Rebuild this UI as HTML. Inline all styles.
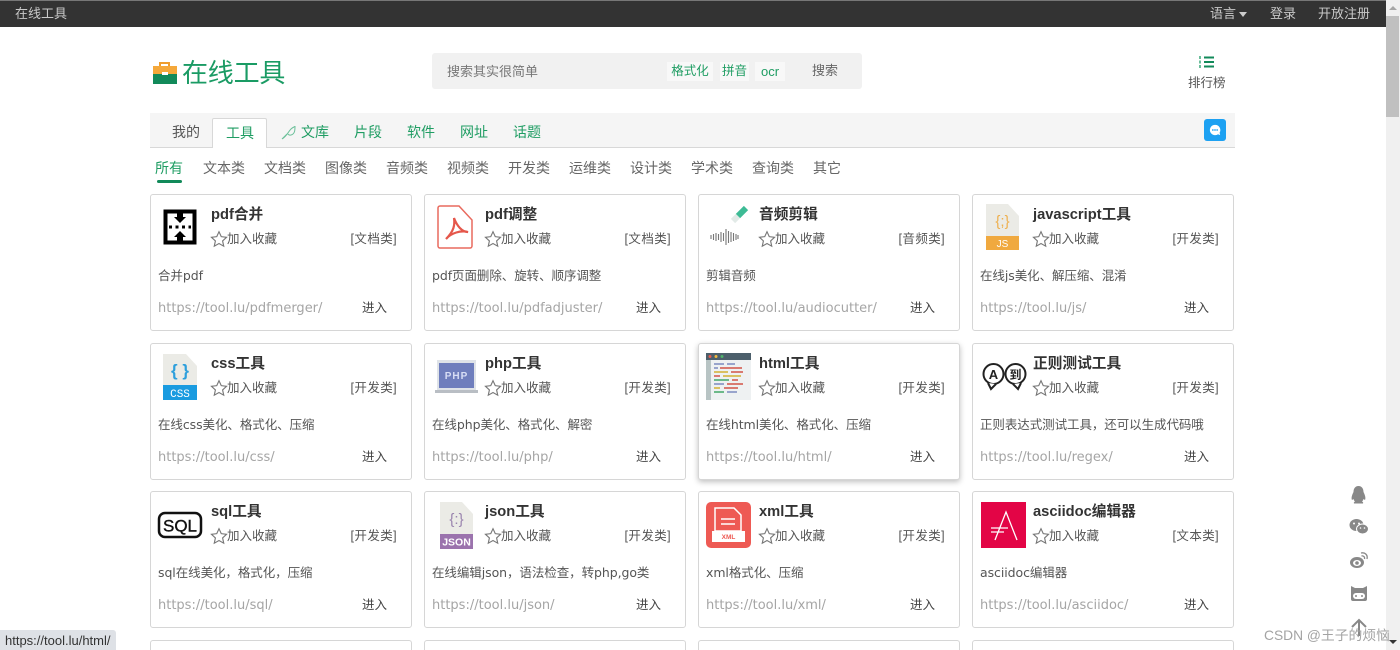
<!DOCTYPE html>
<html lang="zh"><head><meta charset="utf-8"><title>在线工具</title>
<style>
*{box-sizing:border-box}
html,body{margin:0;padding:0;width:1400px;height:650px;overflow:hidden;background:#fff}
body{position:relative;font-family:"Liberation Sans","Noto Sans CJK SC",sans-serif;color:#555}
.a{position:absolute;white-space:nowrap}
#top{left:0;top:0;width:1386px;height:27px;background:#333;border-top:1px solid #777}
.t{color:#c9c9c9;font-size:13px;line-height:26px;top:1px}
.n{top:122px;font-size:14px;line-height:20px;color:#1f9d63}
.s{top:158px;font-size:14px;line-height:20px;color:#666}
.c{position:absolute;width:262px;height:137px;background:#fff;border:1px solid #d6d6d6;border-radius:3px}
.c>*{position:absolute;white-space:nowrap}
.h{left:60px;top:10px;font-size:14.7px;line-height:20px;font-weight:700;color:#333;font-family:"Liberation Sans","Noto Sans CJK SC",sans-serif}
.st{left:59px;top:35px;width:18px;height:18px}
.f{left:76px;top:34px;font-size:12.5px;line-height:20px;color:#555}
.k{right:14px;top:34px;font-size:12.5px;line-height:20px;color:#555;letter-spacing:.4px}
.d{left:7px;top:71px;font-size:12.5px;line-height:20px;color:#555;font-family:"DejaVu Sans","Noto Sans CJK SC",sans-serif;letter-spacing:-.07px}
.u{left:7px;top:104px;font-size:13px;line-height:20px;color:#a5a5a5;font-family:"DejaVu Sans",sans-serif}
.e{left:211px;top:103px;font-size:12.5px;line-height:20px;color:#444}
.c>.i{left:8px;top:8px;width:48px;height:48px;overflow:visible}
.l{height:10px;border-bottom:0;border-radius:3px 3px 0 0}
</style></head><body>
<div class="a" id="top"></div>
<div class="a t" style="left:15px">在线工具</div>
<div class="a t" style="left:1210px">语言</div>
<div class="a" style="left:1239px;top:12px;border:4.5px solid transparent;border-top:5px solid #ccc;border-bottom:0"></div>
<div class="a t" style="left:1270px">登录</div>
<div class="a t" style="left:1318px">开放注册</div>

<div class="a" style="left:1386px;top:0;width:14px;height:650px;background:#f0f0f0"></div>
<div class="a" style="left:1386px;top:16px;width:13px;height:101px;background:#c0c0c0"></div>
<div class="a" style="left:1389px;top:6px;border:4px solid transparent;border-bottom:4px solid #a6a6a6;border-top:0"></div>
<div class="a" style="left:1389px;top:640px;border:4px solid transparent;border-top:4px solid #333;border-bottom:0"></div>

<svg class="a" style="left:152px;top:59px" width="26" height="26" viewBox="0 0 26 26"><path d="M8 7V4h9v3" fill="none" stroke="#ef9d2d" stroke-width="2"/><rect x="1" y="7" width="24" height="8" fill="#f5a83a"/><rect x="1" y="15" width="24" height="10" fill="#128a5a"/><rect x="10" y="13" width="6" height="3" fill="#fff"/></svg>
<div class="a" style="left:182px;top:53.500px;font-size:26px;line-height:38px;color:#1a9b64;letter-spacing:-.2px">在线工具</div>

<div class="a" style="left:432px;top:53px;width:430px;height:36px;background:#f1f1f1;border-radius:3px"></div>
<div class="a" style="left:447px;top:62px;font-size:13px;line-height:20px;color:#777">搜索其实很简单</div>
<div class="a" style="left:667px;top:62px;width:46px;height:19px;background:#f8f8f8;font-size:12.5px;line-height:19px;color:#1f9d63;text-align:center">格式化</div>
<div class="a" style="left:720px;top:62px;width:29px;height:19px;background:#f8f8f8;font-size:12.5px;line-height:19px;color:#1f9d63;text-align:center">拼音</div>
<div class="a" style="left:755px;top:62px;width:30px;height:19px;background:#f8f8f8;font-size:13px;line-height:19px;color:#1f9d63;text-align:center">ocr</div>
<div class="a" style="left:812px;top:61px;font-size:13px;line-height:20px;color:#666">搜索</div>

<svg class="a" style="left:1199px;top:55px" width="16" height="15" viewBox="0 0 16 15"><path d="M5 2.500h10M5 7h10M5 11.500h10" stroke="#128a5a" stroke-width="2"/><path d="M1 1v3M1 5.500v3M1 10v3" stroke="#3aa87a" stroke-width="1.500"/></svg>
<div class="a" style="left:1188px;top:73px;font-size:12.5px;line-height:20px;color:#555">排行榜</div>

<div class="a" style="left:150px;top:113px;width:1085px;height:35px;background:#f5f5f5;border-bottom:1px solid #d8d8d8"></div>
<div class="a" style="left:212px;top:118px;width:55px;height:30px;background:#fff;border:1px solid #d8d8d8;border-bottom:0;border-radius:2px 2px 0 0"></div>
<div class="a n" style="left:172px;color:#555">我的</div>
<div class="a n" style="left:226px;top:123px">工具</div>
<svg class="a" style="left:281px;top:124px" width="16" height="16" viewBox="0 0 16 16"><path d="M1 15C6 12 7 8 10 5c2-2 4-2 4-3 0 4 0 8-4 9-2 .5-3-1-3-1M1 15l5-5" fill="none" stroke="#6cc09a" stroke-width="1"/></svg>
<div class="a n" style="left:301px">文库</div>
<div class="a n" style="left:354px">片段</div>
<div class="a n" style="left:407px">软件</div>
<div class="a n" style="left:460px">网址</div>
<div class="a n" style="left:513px">话题</div>
<div class="a" style="left:1204px;top:119px;width:22px;height:22px;background:#1da1f2;border-radius:3px"></div>
<svg class="a" style="left:1209px;top:124px" width="12" height="12" viewBox="0 0 14 14"><path d="M7 1a6 6 0 1 0 3.500 10.900L13 13l-.6-3A6 6 0 0 0 7 1z" fill="#fff"/><circle cx="4.500" cy="7" r="1" fill="#1da1f2"/><circle cx="7" cy="7" r="1" fill="#1da1f2"/><circle cx="9.500" cy="7" r="1" fill="#1da1f2"/></svg>

<div class="a s" style="left:155px;color:#1f9d63">所有</div>
<div class="a" style="left:157px;top:180px;width:25px;height:3px;background:#128a5a;border-radius:2px"></div>
<div class="a s" style="left:203px">文本类</div>
<div class="a s" style="left:264px">文档类</div>
<div class="a s" style="left:325px">图像类</div>
<div class="a s" style="left:386px">音频类</div>
<div class="a s" style="left:447px">视频类</div>
<div class="a s" style="left:508px">开发类</div>
<div class="a s" style="left:569px">运维类</div>
<div class="a s" style="left:630px">设计类</div>
<div class="a s" style="left:691px">学术类</div>
<div class="a s" style="left:752px">查询类</div>
<div class="a s" style="left:813px">其它</div>

<!-- row 1 -->
<div class="c" style="left:150px;top:194px"><svg class="i" viewBox="0 0 48 48"><rect x="6.500" y="8.500" width="29" height="31" fill="#fff" stroke="#000" stroke-width="4"/><path d="M18 10h6v4h3l-6 6-6-6h3zM18 38v-4h-3l6-6 6 6h-3v4z" fill="#000"/><path d="M10 24h22" stroke="#000" stroke-width="3" stroke-dasharray="3 3.500"/></svg><div class="h">pdf合并</div><svg class="st" viewBox="0 0 16 16"><path d="M8 1.500l2 4.400 4.700.6-3.500 3.200 1 4.700L8 12l-4.200 2.400 1-4.700L1.300 6.500 6 5.900z" fill="none" stroke="#777"/></svg><div class="f">加入收藏</div><div class="k">[文档类]</div><div class="d">合并pdf</div><div class="u">https://tool.lu/pdfmerger/</div><div class="e">进入</div></div>

<div class="c" style="left:424px;top:194px"><svg class="i" viewBox="0 0 48 48"><path d="M7 3h19l13 14v26a2 2 0 0 1-2 2H7a2 2 0 0 1-2-2V5a2 2 0 0 1 2-2z" fill="#fff" stroke="#e96a5e" stroke-width="1.500"/><path d="M21 15c1 7 0 13-8 21 5-6 15-9 22-7-6 0-11-6-14-14z" fill="none" stroke="#e5574b" stroke-width="2.200"/></svg><div class="h">pdf调整</div><svg class="st" viewBox="0 0 16 16"><path d="M8 1.500l2 4.400 4.700.6-3.500 3.200 1 4.700L8 12l-4.200 2.400 1-4.700L1.300 6.500 6 5.900z" fill="none" stroke="#777"/></svg><div class="f">加入收藏</div><div class="k">[文档类]</div><div class="d">pdf页面删除、旋转、顺序调整</div><div class="u">https://tool.lu/pdfadjuster/</div><div class="e">进入</div></div>

<div class="c" style="left:698px;top:194px"><svg class="i" viewBox="0 0 48 48"><path d="M26 18l6-6" stroke="#e2eae7" stroke-width="6"/><path d="M31 13l8-8" stroke="#3dbb95" stroke-width="6"/><path d="M4 32v4M6.500 31v6M9 30v8M11.500 31v6M14 29v10M16.500 30v8M19 26v16M21.500 28v12M24 29v10M26.500 30v8M29 31v6M31 32v4" stroke="#777" stroke-width="1.100"/></svg><div class="h">音频剪辑</div><svg class="st" viewBox="0 0 16 16"><path d="M8 1.500l2 4.400 4.700.6-3.500 3.200 1 4.700L8 12l-4.200 2.400 1-4.700L1.300 6.500 6 5.900z" fill="none" stroke="#777"/></svg><div class="f">加入收藏</div><div class="k">[音频类]</div><div class="d">剪辑音频</div><div class="u">https://tool.lu/audiocutter/</div><div class="e">进入</div></div>

<div class="c" style="left:972px;top:194px"><svg class="i" viewBox="0 0 48 48"><path d="M5 1h22l11 12v20H5z" fill="#ebebe6"/><rect x="5" y="33" width="33" height="14" fill="#f0a93f"/><text x="21.500" y="23" text-anchor="middle" font-size="15" fill="#eeb04f" font-family="Liberation Sans">{;}</text><text x="21.500" y="44" text-anchor="middle" font-size="10" fill="#fff" font-family="Liberation Sans">JS</text></svg><div class="h">javascript工具</div><svg class="st" viewBox="0 0 16 16"><path d="M8 1.500l2 4.400 4.700.6-3.500 3.200 1 4.700L8 12l-4.200 2.400 1-4.700L1.300 6.500 6 5.900z" fill="none" stroke="#777"/></svg><div class="f">加入收藏</div><div class="k">[开发类]</div><div class="d">在线js美化、解压缩、混淆</div><div class="u">https://tool.lu/js/</div><div class="e">进入</div></div>

<!-- row 2 -->
<div class="c" style="left:150px;top:343px"><svg class="i" viewBox="0 0 48 48"><path d="M4 2h23l11 12v19H4z" fill="#ebebe6"/><rect x="4" y="33" width="34" height="15" fill="#1a9be0"/><text x="21" y="24" text-anchor="middle" font-size="17" font-weight="700" fill="#2d9fdc" font-family="Liberation Sans">{ }</text><text x="21" y="45" text-anchor="middle" font-size="11" fill="#fff" font-family="Liberation Mono">CSS</text></svg><div class="h">css工具</div><svg class="st" viewBox="0 0 16 16"><path d="M8 1.500l2 4.400 4.700.6-3.500 3.200 1 4.700L8 12l-4.200 2.400 1-4.700L1.300 6.500 6 5.900z" fill="none" stroke="#777"/></svg><div class="f">加入收藏</div><div class="k">[开发类]</div><div class="d">在线css美化、格式化、压缩</div><div class="u">https://tool.lu/css/</div><div class="e">进入</div></div>

<div class="c" style="left:424px;top:343px"><svg class="i" viewBox="0 0 48 48"><rect x="4" y="8" width="39" height="30" fill="#dfe3e8"/><rect x="6" y="11" width="35" height="25" fill="#6f7ebd"/><rect x="2" y="38" width="43" height="3" fill="#b9bec4"/><text x="23.500" y="27" text-anchor="middle" font-size="10" font-weight="700" fill="#d8def5" font-family="Liberation Sans" letter-spacing="1">PHP</text></svg><div class="h">php工具</div><svg class="st" viewBox="0 0 16 16"><path d="M8 1.500l2 4.400 4.700.6-3.500 3.200 1 4.700L8 12l-4.200 2.400 1-4.700L1.300 6.500 6 5.900z" fill="none" stroke="#777"/></svg><div class="f">加入收藏</div><div class="k">[开发类]</div><div class="d">在线php美化、格式化、解密</div><div class="u">https://tool.lu/php/</div><div class="e">进入</div></div>

<div class="c" style="left:698px;top:343px;box-shadow:0 2px 6px rgba(0,0,0,.25)"><svg class="i" viewBox="0 0 48 48"><rect x="-1" y="1" width="45" height="47" fill="#eef1f2"/><rect x="-1" y="1" width="45" height="7" fill="#4c5f6b"/><rect x="-1" y="8" width="5" height="40" fill="#b8c4c4"/><circle cx="3" cy="4.500" r="1.500" fill="#e85c50"/><circle cx="9" cy="4.500" r="1.500" fill="#f2b83c"/><circle cx="15" cy="4.500" r="1.500" fill="#4fb46a"/><path d="M7 12h10M20 12h8M7 16h4M13 16h22M7 20h14M24 20h12M7 24h6M16 24h18M7 28h15M25 28h6M7 32h10M20 32h16M7 36h6M17 36h14M7 40h10M20 40h10" stroke-width="1.500" stroke="#7c8ac0"/><path d="M13 16h22M24 20h12M7 24h6M25 28h6M20 32h16M17 36h14" stroke-width="1.500" stroke="#e5654f"/><path d="M7 20h14M16 24h18M7 36h6" stroke-width="1.500" stroke="#e7c23a"/><path d="M7 40h10M7 28h15" stroke-width="1.500" stroke="#55b86f"/></svg><div class="h">html工具</div><svg class="st" viewBox="0 0 16 16"><path d="M8 1.500l2 4.400 4.700.6-3.500 3.200 1 4.700L8 12l-4.200 2.400 1-4.700L1.300 6.500 6 5.900z" fill="none" stroke="#777"/></svg><div class="f">加入收藏</div><div class="k">[开发类]</div><div class="d">在线html美化、格式化、压缩</div><div class="u">https://tool.lu/html/</div><div class="e">进入</div></div>

<div class="c" style="left:972px;top:343px"><svg class="i" viewBox="0 0 48 48"><circle cx="12.500" cy="22" r="10" fill="none" stroke="#222" stroke-width="2"/><path d="M7 31l3 6 5-5" fill="#fff" stroke="#222" stroke-width="2"/><circle cx="34.500" cy="22" r="10" fill="none" stroke="#222" stroke-width="2"/><path d="M32 32l5 5 3-6" fill="#fff" stroke="#222" stroke-width="2"/><text x="12.500" y="27" text-anchor="middle" font-size="13" font-weight="700" fill="#222" font-family="Liberation Sans">A</text><text x="34.500" y="27" text-anchor="middle" font-size="12" font-weight="700" fill="#222" font-family="Noto Sans CJK SC,sans-serif">到</text></svg><div class="h">正则测试工具</div><svg class="st" viewBox="0 0 16 16"><path d="M8 1.500l2 4.400 4.700.6-3.500 3.200 1 4.700L8 12l-4.200 2.400 1-4.700L1.300 6.500 6 5.900z" fill="none" stroke="#777"/></svg><div class="f">加入收藏</div><div class="k">[开发类]</div><div class="d">正则表达式测试工具，还可以生成代码哦</div><div class="u">https://tool.lu/regex/</div><div class="e">进入</div></div>

<!-- row 3 -->
<div class="c" style="left:150px;top:491px"><svg class="i" viewBox="0 0 48 48"><rect x="0" y="13" width="42" height="24" rx="6" fill="#fff" stroke="#111" stroke-width="2.500"/><text x="21" y="31.500" text-anchor="middle" font-size="17" fill="#111" stroke="#111" stroke-width=".4" font-family="Liberation Sans">SQL</text></svg><div class="h">sql工具</div><svg class="st" viewBox="0 0 16 16"><path d="M8 1.500l2 4.400 4.700.6-3.500 3.200 1 4.700L8 12l-4.200 2.400 1-4.700L1.300 6.500 6 5.900z" fill="none" stroke="#777"/></svg><div class="f">加入收藏</div><div class="k">[开发类]</div><div class="d">sql在线美化，格式化，压缩</div><div class="u">https://tool.lu/sql/</div><div class="e">进入</div></div>

<div class="c" style="left:424px;top:491px"><svg class="i" viewBox="0 0 48 48"><path d="M7 2h22l11 12v20H7z" fill="#ebebe6"/><rect x="7" y="34" width="33" height="15" fill="#9b73ad"/><text x="23.500" y="24" text-anchor="middle" font-size="15" fill="#9a84ae" font-family="Liberation Sans">{:}</text><text x="23.500" y="45.500" text-anchor="middle" font-size="10.500" font-weight="700" fill="#fff" font-family="Liberation Sans">JSON</text></svg><div class="h">json工具</div><svg class="st" viewBox="0 0 16 16"><path d="M8 1.500l2 4.400 4.700.6-3.500 3.200 1 4.700L8 12l-4.200 2.400 1-4.700L1.300 6.500 6 5.900z" fill="none" stroke="#777"/></svg><div class="f">加入收藏</div><div class="k">[开发类]</div><div class="d">在线编辑json，语法检查，转php,go类</div><div class="u">https://tool.lu/json/</div><div class="e">进入</div></div>

<div class="c" style="left:698px;top:491px"><svg class="i" viewBox="0 0 48 48"><rect x="-1" y="2" width="45" height="46" rx="5" fill="#ee5a54"/><path d="M8 8h19l7 7v16H8z" fill="none" stroke="#fff" stroke-width="1.500"/><path d="M14 19h14M14 24h14" stroke="#fff" stroke-width="1.500"/><rect x="5" y="31" width="33" height="11" fill="#fff"/><text x="21.500" y="39" text-anchor="middle" font-size="6.500" font-weight="700" fill="#ee5a54" font-family="Liberation Sans">XML</text></svg><div class="h">xml工具</div><svg class="st" viewBox="0 0 16 16"><path d="M8 1.500l2 4.400 4.700.6-3.500 3.200 1 4.700L8 12l-4.200 2.400 1-4.700L1.300 6.500 6 5.900z" fill="none" stroke="#777"/></svg><div class="f">加入收藏</div><div class="k">[开发类]</div><div class="d">xml格式化、压缩</div><div class="u">https://tool.lu/xml/</div><div class="e">进入</div></div>

<div class="c" style="left:972px;top:491px"><svg class="i" viewBox="0 0 48 48"><rect x="0" y="2" width="45" height="46" fill="#e30546"/><path d="M14 40l11-28 11 28M10 28h17M10 32h13" fill="none" stroke="#fff" stroke-width="1.300"/></svg><div class="h">asciidoc编辑器</div><svg class="st" viewBox="0 0 16 16"><path d="M8 1.500l2 4.400 4.700.6-3.500 3.200 1 4.700L8 12l-4.200 2.400 1-4.700L1.300 6.500 6 5.900z" fill="none" stroke="#777"/></svg><div class="f">加入收藏</div><div class="k">[文本类]</div><div class="d">asciidoc编辑器</div><div class="u">https://tool.lu/asciidoc/</div><div class="e">进入</div></div>

<!-- row 4 partial -->
<div class="c l" style="left:150px;top:640px"></div>
<div class="c l" style="left:424px;top:640px"></div>
<div class="c l" style="left:698px;top:640px"></div>
<div class="c l" style="left:972px;top:640px"></div>

<!-- side icons -->
<svg class="a" style="left:1350px;top:485px" width="17" height="19" viewBox="0 0 17 19"><path d="M8.500 1C5 1 3.500 4 3.500 7 2 10 1 13 2 15l1.500-1c.3 1 .8 2 1.500 2.500-1 .5-1.500 1-1 2h9c.5-1 0-1.500-1-2 .7-.5 1.200-1.500 1.500-2.500l1.500 1c1-2 0-5-1.500-8 0-3-1.500-6-5-6z" fill="#888"/></svg>
<svg class="a" style="left:1349px;top:518px" width="20" height="18" viewBox="0 0 20 18"><ellipse cx="7.500" cy="7" rx="7" ry="6" fill="#888"/><ellipse cx="13.500" cy="11" rx="6" ry="5" fill="#888" stroke="#fff"/><circle cx="5" cy="5.500" r="1" fill="#fff"/><circle cx="10" cy="5.500" r="1" fill="#fff"/><circle cx="11.500" cy="10" r=".8" fill="#fff"/><circle cx="15.500" cy="10" r=".8" fill="#fff"/></svg>
<svg class="a" style="left:1349px;top:551px" width="20" height="18" viewBox="0 0 20 18"><ellipse cx="8" cy="11.500" rx="7" ry="5.500" fill="#888"/><ellipse cx="8" cy="12" rx="4" ry="3" fill="#fff"/><circle cx="8" cy="12" r="1.800" fill="#888"/><path d="M12 2c4-1 7 2 6 6M12.500 5c2-.5 3.500 1 3 3" fill="none" stroke="#888" stroke-width="1.300"/></svg>
<svg class="a" style="left:1350px;top:585px" width="18" height="16" viewBox="0 0 18 16"><path d="M1 1l4 2h8l4-2v13a2 2 0 0 1-2 2H3a2 2 0 0 1-2-2z" fill="#888"/><rect x="3" y="8" width="12" height="6" rx="3" fill="#fff"/><circle cx="6" cy="11" r="1" fill="#888"/><circle cx="12" cy="11" r="1" fill="#888"/></svg>
<svg class="a" style="left:1350px;top:618px" width="18" height="18" viewBox="0 0 18 18"><path d="M9 18V2M2 9l7-7 7 7" fill="none" stroke="#888" stroke-width="2"/></svg>

<div class="a" style="left:1264px;top:627px;font-size:13.8px;line-height:18px;color:#a3a3a3">CSDN @王子的烦恼</div>
<div class="a" style="left:0;top:630px;width:116px;height:20px;background:#dee1e6;border-radius:0 3px 0 0;font-size:13px;line-height:21px;color:#333;padding-left:5px">https://tool.lu/html/</div>
</body></html>
